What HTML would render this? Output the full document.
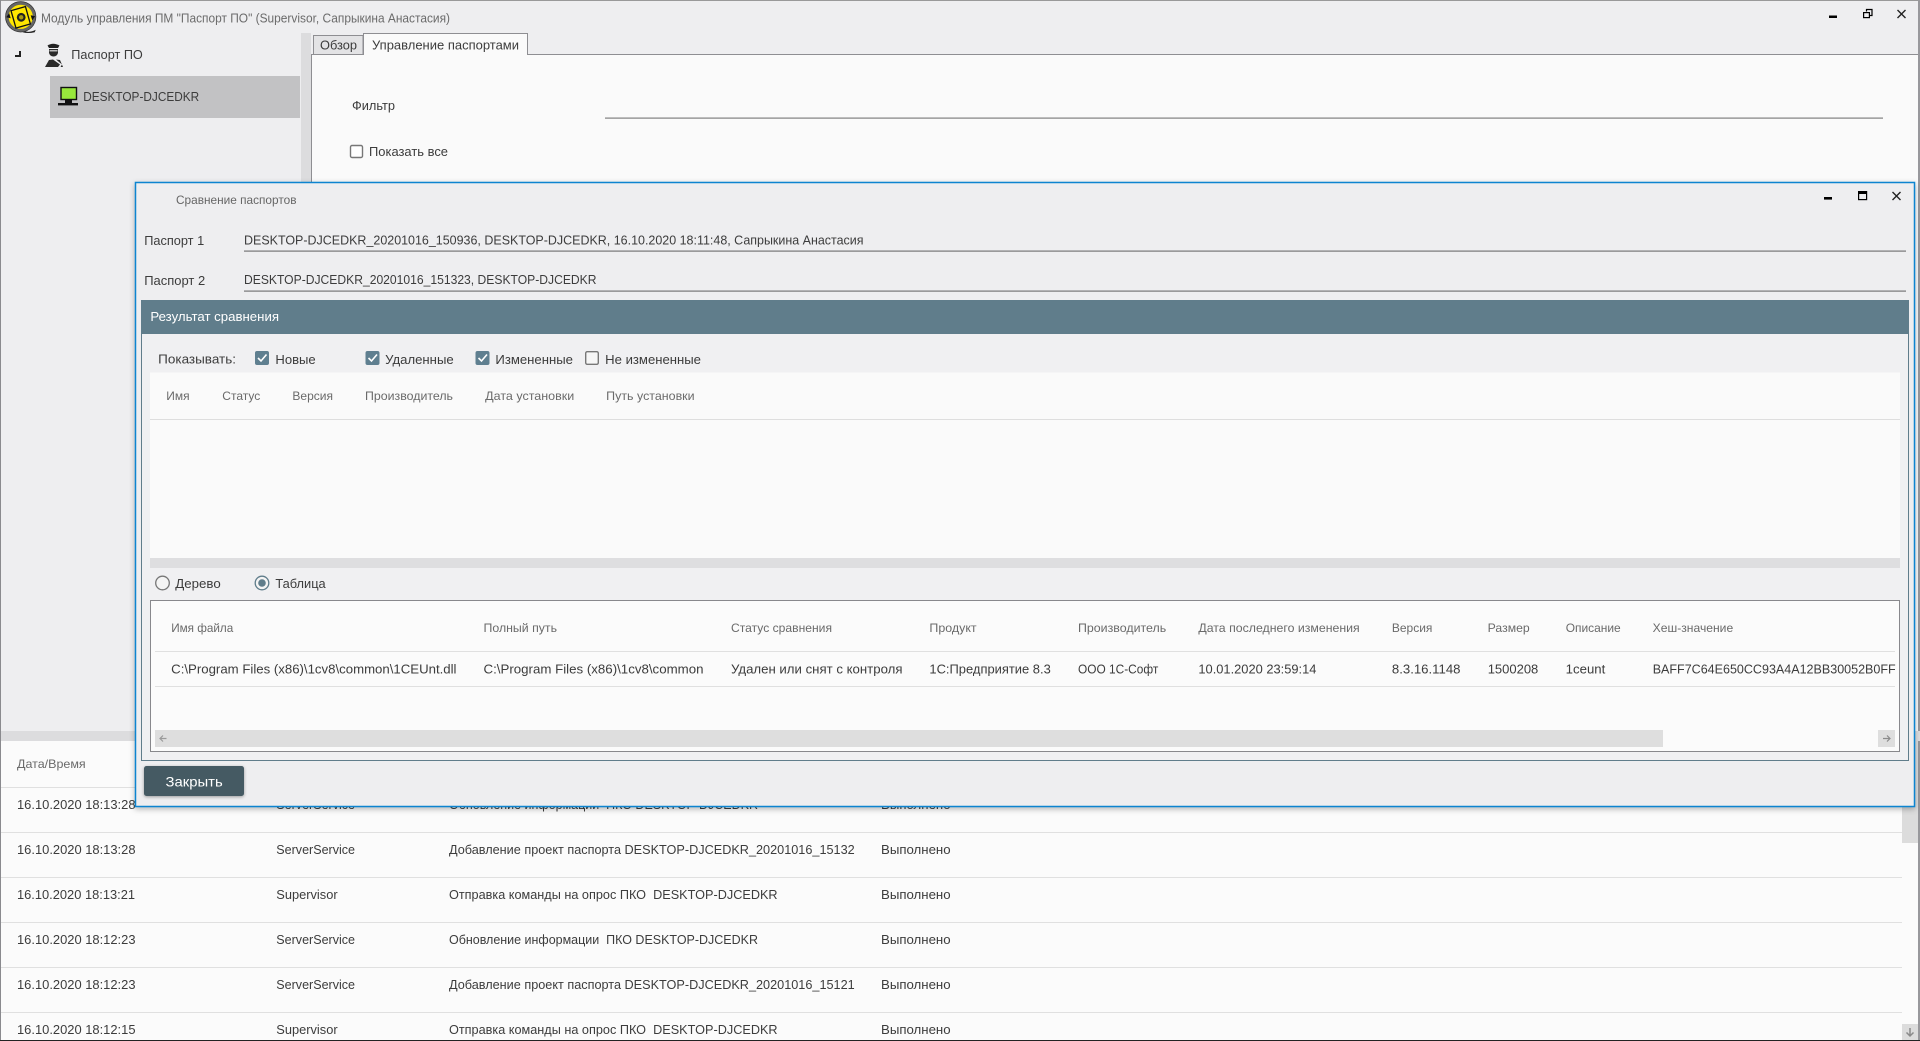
<!DOCTYPE html>
<html lang="ru"><head><meta charset="utf-8"><title>Модуль управления ПМ "Паспорт ПО"</title>
<style>
html,body{margin:0;padding:0;width:1920px;height:1041px;overflow:hidden;background:#eeeef0}
svg{display:block}
text{font-family:"Liberation Sans","DejaVu Sans",sans-serif;font-size:13px;fill:#3c3c3c}
.h{font-size:12px;fill:#6a6a6a}
.t{fill:#6b6b6b}
.w{fill:#fff}
</style></head><body>
<svg xmlns="http://www.w3.org/2000/svg" width="1920" height="1041" viewBox="0 0 1920 1041">
<defs>
<filter id="sh" x="-2%" y="-3%" width="104%" height="106%"><feDropShadow dx="0" dy="2" stdDeviation="3" flood-color="#000" flood-opacity=".28"/></filter>
<filter id="bs" x="-10%" y="-20%" width="120%" height="150%"><feDropShadow dx="0" dy="1" stdDeviation="1.5" flood-color="#000" flood-opacity=".35"/></filter>
</defs>
<rect width="1920" height="1041" fill="#eeeef0"/>
<!-- window frame -->
<rect x="0" y="0" width="1920" height="1" fill="#999"/>
<!-- logo -->
<g transform="translate(.7 .3)">
<path d="M22 30.5Q29 33 35 29.5L34 32Q27 33.5 22 32Z" fill="#222"/>
<circle cx="20" cy="16.5" r="13.6" fill="#ffe600" stroke="#666" stroke-width="3"/>
<circle cx="20" cy="16.5" r="15.2" fill="none" stroke="#333" stroke-width=".7"/>
<rect x="12.5" y="8" width="15" height="18" transform="rotate(-16 20 17)" fill="#ffe600" stroke="#111" stroke-width="1.3"/>
<circle cx="20.5" cy="17" r="4.4" fill="#222"/><circle cx="20.5" cy="17" r="2.2" fill="#a89b10"/>
<path d="M5.5 17l3-4 1.5 5zM34.5 16l-3 4-1.5-5z" fill="#111"/>
</g>
<text x="41" y="22.5" textLength="409" lengthAdjust="spacingAndGlyphs" class="t">Модуль управления ПМ "Паспорт ПО" (Supervisor, Сапрыкина Анастасия)</text>
<!-- window controls -->
<rect x="1829" y="15.5" width="8" height="2.5" fill="#000"/>
<path d="M1866.5 11.5V9.5H1872V15.5H1869.5" fill="none" stroke="#000" stroke-width="1.2"/><rect x="1863.6" y="12.6" width="5.8" height="5" fill="none" stroke="#000" stroke-width="1.2"/>
<path d="M1897.5 10L1905.5 18M1905.5 10L1897.5 18" stroke="#222" stroke-width="1.4"/>
<!-- tree -->
<path d="M15 56H20V51" fill="none" stroke="#222" stroke-width="2"/>
<path d="M47.5 45.5Q53 42 59.5 45.5L58 48H49Z" fill="#222"/><path d="M49 49H58V53Q57 56.5 53.5 56.5Q50 56.5 49 53Z" fill="#2a2a2a"/><rect x="49.5" y="50" width="8" height="1.5" fill="#bbb"/>
<path d="M45 67L49 60L53 59.5L60 64.5L58 67ZM56 59.5L60 60L63 67H60.5L62 64.5Z" fill="#2a2a2a"/>
<text x="71.3" y="59" textLength="71.5" lengthAdjust="spacingAndGlyphs" fill="#444">Паспорт ПО</text>
<rect x="50" y="76" width="250" height="42" fill="#c2c2c4"/>
<rect x="61" y="87.5" width="15.5" height="12" fill="#98e83c" stroke="#111" stroke-width="1.4"/>
<rect x="65" y="100" width="7" height="3" fill="#111"/><rect x="58" y="103" width="20" height="2.4" fill="#111"/>
<text x="83.2" y="101" textLength="116" lengthAdjust="spacingAndGlyphs">DESKTOP-DJCEDKR</text>
<rect x="301" y="33" width="10" height="700" fill="#dcdcde"/>
<!-- content panel -->
<rect x="311.5" y="54.5" width="1607" height="677" fill="#fafafa" stroke="#8e8e92"/>
<rect x="1918" y="0" width="2" height="1041" fill="#98989c"/>
<path d="M313.5 54V35.5H363V54" fill="#e3e3e5" stroke="#8e8e92"/>
<path d="M363.5 54V33.5H527.5V54" fill="#fafafa" stroke="#8e8e92"/><rect x="364" y="53" width="163" height="3" fill="#fafafa"/>
<text x="320" y="49.5" textLength="37" lengthAdjust="spacingAndGlyphs" fill="#333">Обзор</text>
<text x="372" y="49.5" textLength="147" lengthAdjust="spacingAndGlyphs" fill="#222">Управление паспортами</text>
<text x="352" y="110" textLength="43" lengthAdjust="spacingAndGlyphs">Фильтр</text>
<rect x="605" y="117.5" width="1278" height="1.2" fill="#808080"/>
<rect x="350.5" y="145.5" width="12" height="12" rx="1.5" fill="#fff" stroke="#777" stroke-width="1.4"/>
<text x="369" y="156" textLength="79" lengthAdjust="spacingAndGlyphs">Показать все</text>
<!-- log area -->
<rect x="0" y="731" width="1920" height="10" fill="#dcdcde"/>
<rect x="1" y="741" width="1917" height="299" fill="#fbfbfb"/>
<rect x="0" y="0" width="1" height="1041" fill="#8a8a8e"/>
<text x="17" y="768" textLength="68.7" lengthAdjust="spacingAndGlyphs" class="h">Дата/Время</text>
<g fill="#e0e0e0"><rect x="1" y="787" width="1901" height="1"/><rect x="1" y="832" width="1901" height="1"/><rect x="1" y="877" width="1901" height="1"/><rect x="1" y="922" width="1901" height="1"/><rect x="1" y="967" width="1901" height="1"/><rect x="1" y="1012" width="1901" height="1"/></g>
<text x="17" y="809" textLength="118.5" lengthAdjust="spacingAndGlyphs">16.10.2020 18:13:28</text>
<text x="276.3" y="809" textLength="78.7" lengthAdjust="spacingAndGlyphs">ServerService</text>
<text x="449" y="809" textLength="309" lengthAdjust="spacingAndGlyphs" xml:space="preserve">Обновление информации  ПКО DESKTOP-DJCEDKR</text>
<text x="881" y="809" textLength="69.6" lengthAdjust="spacingAndGlyphs">Выполнено</text>
<text x="17" y="854" textLength="118.5" lengthAdjust="spacingAndGlyphs">16.10.2020 18:13:28</text>
<text x="276.3" y="854" textLength="78.7" lengthAdjust="spacingAndGlyphs">ServerService</text>
<text x="449" y="854" textLength="405.7" lengthAdjust="spacingAndGlyphs">Добавление проект паспорта DESKTOP-DJCEDKR_20201016_15132</text>
<text x="881" y="854" textLength="69.6" lengthAdjust="spacingAndGlyphs">Выполнено</text>
<text x="17" y="899" textLength="118" lengthAdjust="spacingAndGlyphs">16.10.2020 18:13:21</text>
<text x="276.3" y="899" textLength="61.3" lengthAdjust="spacingAndGlyphs">Supervisor</text>
<text x="449" y="899" textLength="328.6" lengthAdjust="spacingAndGlyphs" xml:space="preserve">Отправка команды на опрос ПКО  DESKTOP-DJCEDKR</text>
<text x="881" y="899" textLength="69.6" lengthAdjust="spacingAndGlyphs">Выполнено</text>
<text x="17" y="944" textLength="118.5" lengthAdjust="spacingAndGlyphs">16.10.2020 18:12:23</text>
<text x="276.3" y="944" textLength="78.7" lengthAdjust="spacingAndGlyphs">ServerService</text>
<text x="449" y="944" textLength="309" lengthAdjust="spacingAndGlyphs" xml:space="preserve">Обновление информации  ПКО DESKTOP-DJCEDKR</text>
<text x="881" y="944" textLength="69.6" lengthAdjust="spacingAndGlyphs">Выполнено</text>
<text x="17" y="989" textLength="118.5" lengthAdjust="spacingAndGlyphs">16.10.2020 18:12:23</text>
<text x="276.3" y="989" textLength="78.7" lengthAdjust="spacingAndGlyphs">ServerService</text>
<text x="449" y="989" textLength="405.7" lengthAdjust="spacingAndGlyphs">Добавление проект паспорта DESKTOP-DJCEDKR_20201016_15121</text>
<text x="881" y="989" textLength="69.6" lengthAdjust="spacingAndGlyphs">Выполнено</text>
<text x="17" y="1034" textLength="118.5" lengthAdjust="spacingAndGlyphs">16.10.2020 18:12:15</text>
<text x="276.3" y="1034" textLength="61.3" lengthAdjust="spacingAndGlyphs">Supervisor</text>
<text x="449" y="1034" textLength="328.6" lengthAdjust="spacingAndGlyphs" xml:space="preserve">Отправка команды на опрос ПКО  DESKTOP-DJCEDKR</text>
<text x="881" y="1034" textLength="69.6" lengthAdjust="spacingAndGlyphs">Выполнено</text>
<!-- log scrollbar -->
<rect x="1902" y="741" width="16" height="102" fill="#dcdcdc"/>
<rect x="1902" y="1024" width="16" height="16" fill="#dcdcdc"/>
<path d="M1910 1028V1036M1906.5 1032.5L1910 1036L1913.5 1032.5" fill="none" stroke="#8a8a8a" stroke-width="1.5"/>
<rect x="0" y="1040" width="1920" height="1" fill="#222"/>
<!-- dialog -->
<rect x="135.5" y="182.5" width="1779" height="624" fill="#eeeef0" stroke="#0a84d0" stroke-width="1.5" filter="url(#sh)"/>
<text x="176" y="204" textLength="120.5" lengthAdjust="spacingAndGlyphs" style="font-size:12px;fill:#666">Сравнение паспортов</text>
<rect x="1824" y="197" width="8" height="2.6" fill="#000"/>
<rect x="1858.6" y="191.6" width="8" height="8" fill="none" stroke="#000" stroke-width="1.2"/><rect x="1858" y="191" width="9" height="3" fill="#000"/>
<path d="M1892.5 192L1900.5 200M1900.5 192L1892.5 200" stroke="#222" stroke-width="1.4"/>
<text x="144.2" y="245" textLength="60" lengthAdjust="spacingAndGlyphs">Паспорт 1</text>
<text x="244" y="244.5" textLength="619.5" lengthAdjust="spacingAndGlyphs">DESKTOP-DJCEDKR_20201016_150936, DESKTOP-DJCEDKR, 16.10.2020 18:11:48, Сапрыкина Анастасия</text>
<rect x="244" y="250.5" width="1662" height="1.2" fill="#777"/>
<text x="144.2" y="285" textLength="61" lengthAdjust="spacingAndGlyphs">Паспорт 2</text>
<text x="244" y="284" textLength="352.5" lengthAdjust="spacingAndGlyphs">DESKTOP-DJCEDKR_20201016_151323, DESKTOP-DJCEDKR</text>
<rect x="244" y="290.5" width="1662" height="1.2" fill="#777"/>
<!-- result panel -->
<rect x="141.5" y="300.5" width="1767" height="460" fill="#f0f0f2" stroke="#607d8b"/>
<rect x="141" y="300" width="1768" height="34" fill="#607d8b"/>
<text x="150.4" y="321" textLength="128.6" lengthAdjust="spacingAndGlyphs" class="w">Результат сравнения</text>
<text x="158.2" y="363.5" textLength="77.8" lengthAdjust="spacingAndGlyphs">Показывать:</text>
<g fill="#5f7f90"><rect x="255" y="351" width="14" height="14" rx="2"/><rect x="365.5" y="351" width="14" height="14" rx="2"/><rect x="475.5" y="351" width="14" height="14" rx="2"/></g>
<g fill="none" stroke="#fff" stroke-width="1.6"><path d="M258 358L261 361L266.5 354.5"/><path d="M368.5 358L371.5 361L377 354.5"/><path d="M478.5 358L481.5 361L487 354.5"/></g>
<rect x="585.7" y="351.7" width="12.6" height="12.6" rx="1.5" fill="#f6f6f6" stroke="#777" stroke-width="1.4"/>
<text x="275.4" y="364" textLength="40.3" lengthAdjust="spacingAndGlyphs">Новые</text>
<text x="385.2" y="364" textLength="68.5" lengthAdjust="spacingAndGlyphs">Удаленные</text>
<text x="495.4" y="364" textLength="77.6" lengthAdjust="spacingAndGlyphs">Измененные</text>
<text x="605.2" y="364" textLength="95.8" lengthAdjust="spacingAndGlyphs">Не измененные</text>
<!-- upper table -->
<rect x="150" y="372.5" width="1750" height="186" fill="#fafafa"/>
<rect x="150" y="419" width="1750" height="1" fill="#dedede"/>
<rect x="150" y="558" width="1750" height="10" fill="#dedee0"/>
<text x="166.3" y="400" textLength="23.3" lengthAdjust="spacingAndGlyphs" class="h">Имя</text>
<text x="222.3" y="400" textLength="38" lengthAdjust="spacingAndGlyphs" class="h">Статус</text>
<text x="292.4" y="400" textLength="40.6" lengthAdjust="spacingAndGlyphs" class="h">Версия</text>
<text x="365" y="400" textLength="88" lengthAdjust="spacingAndGlyphs" class="h">Производитель</text>
<text x="485.2" y="400" textLength="89" lengthAdjust="spacingAndGlyphs" class="h">Дата установки</text>
<text x="606.2" y="400" textLength="88.4" lengthAdjust="spacingAndGlyphs" class="h">Путь установки</text>
<!-- radios -->
<circle cx="162.5" cy="583" r="6.8" fill="#f4f4f4" stroke="#777" stroke-width="1.3"/>
<text x="175.3" y="588" textLength="45.4" lengthAdjust="spacingAndGlyphs">Дерево</text>
<circle cx="262" cy="583" r="6.8" fill="#f4f4f4" stroke="#607d8b" stroke-width="1.3"/><circle cx="262" cy="583" r="3.8" fill="#607d8b"/>
<text x="275.4" y="588" textLength="50.3" lengthAdjust="spacingAndGlyphs">Таблица</text>
<!-- lower table -->
<rect x="150.5" y="600.5" width="1749" height="151" fill="#fbfbfb" stroke="#88888c"/>
<rect x="155" y="651" width="1740" height="1" fill="#e0e0e0"/>
<rect x="155" y="686" width="1740" height="1" fill="#e0e0e0"/>
<text x="171.2" y="632" textLength="62.1" lengthAdjust="spacingAndGlyphs" class="h">Имя файла</text>
<text x="483.5" y="632" textLength="73.5" lengthAdjust="spacingAndGlyphs" class="h">Полный путь</text>
<text x="731" y="632" textLength="101" lengthAdjust="spacingAndGlyphs" class="h">Статус сравнения</text>
<text x="929.4" y="632" textLength="47.2" lengthAdjust="spacingAndGlyphs" class="h">Продукт</text>
<text x="1078" y="632" textLength="88.2" lengthAdjust="spacingAndGlyphs" class="h">Производитель</text>
<text x="1198.4" y="632" textLength="161.3" lengthAdjust="spacingAndGlyphs" class="h">Дата последнего изменения</text>
<text x="1391.9" y="632" textLength="40.5" lengthAdjust="spacingAndGlyphs" class="h">Версия</text>
<text x="1487.7" y="632" textLength="42" lengthAdjust="spacingAndGlyphs" class="h">Размер</text>
<text x="1565.7" y="632" textLength="55" lengthAdjust="spacingAndGlyphs" class="h">Описание</text>
<text x="1652.7" y="632" textLength="80.5" lengthAdjust="spacingAndGlyphs" class="h">Хеш-значение</text>
<text x="171.2" y="673.5" textLength="285.3" lengthAdjust="spacingAndGlyphs">C:\Program Files (x86)\1cv8\common\1CEUnt.dll</text>
<text x="483.5" y="673.5" textLength="220" lengthAdjust="spacingAndGlyphs">C:\Program Files (x86)\1cv8\common</text>
<text x="731" y="673.5" textLength="171.5" lengthAdjust="spacingAndGlyphs">Удален или снят с контроля</text>
<text x="929.4" y="673.5" textLength="121.4" lengthAdjust="spacingAndGlyphs">1С:Предприятие 8.3</text>
<text x="1078" y="673.5" textLength="80.3" lengthAdjust="spacingAndGlyphs">ООО 1С-Софт</text>
<text x="1198.4" y="673.5" textLength="118" lengthAdjust="spacingAndGlyphs">10.01.2020 23:59:14</text>
<text x="1391.9" y="673.5" textLength="68.6" lengthAdjust="spacingAndGlyphs">8.3.16.1148</text>
<text x="1487.7" y="673.5" textLength="50.6" lengthAdjust="spacingAndGlyphs">1500208</text>
<text x="1565.7" y="673.5" textLength="39.6" lengthAdjust="spacingAndGlyphs">1ceunt</text>
<text x="1652.7" y="673.5" textLength="243" lengthAdjust="spacingAndGlyphs">BAFF7C64E650CC93A4A12BB30052B0FF</text>
<rect x="155" y="730" width="1508" height="17" fill="#dedede"/>
<rect x="1878" y="730" width="17" height="17" fill="#dedede"/>
<path d="M166.5 738.5H160.5M163 735.5L160 738.5L163 741.5" fill="none" stroke="#9a9a9a" stroke-width="1.2"/>
<path d="M1883 738.5H1889.5M1887 735.5L1890 738.5L1887 741.5" fill="none" stroke="#8a8a8a" stroke-width="1.2"/>
<!-- close button -->
<rect x="144" y="766" width="100" height="30" rx="2.5" fill="#455a64" filter="url(#bs)"/>
<text x="165.5" y="786.5" textLength="57.2" lengthAdjust="spacingAndGlyphs" class="w" style="font-size:14px">Закрыть</text>
</svg>
</body></html>
